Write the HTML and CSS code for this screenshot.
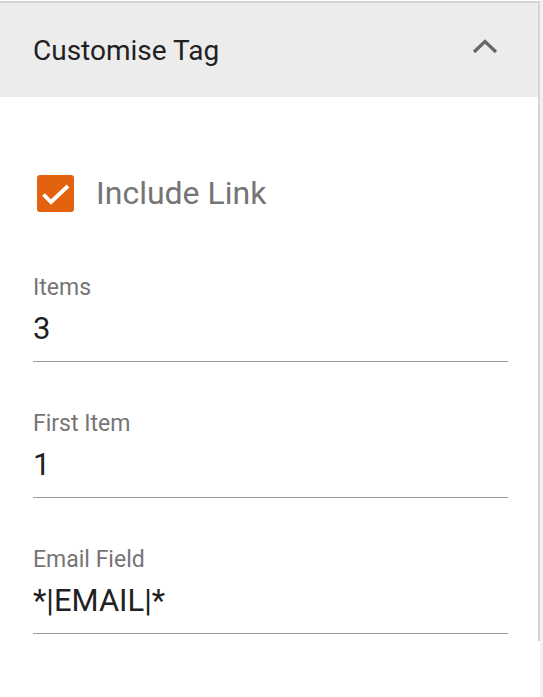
FILE: index.html
```html
<!DOCTYPE html>
<html>
<head>
<meta charset="utf-8">
<link rel="stylesheet" href="styles.css">
</head>
<body>
<div class="page">
  <div class="panel">
    <div class="header">
      <span class="title">Customise Tag</span>
      <svg class="chevron" width="26" height="16" viewBox="0 0 26 16"><path d="M2 14 L13 3.5 L24 14" fill="none" stroke="#666" stroke-width="3.2"/></svg>
    </div>
    <div class="body">
      <label class="check-row">
        <span class="checkbox">
          <svg width="37" height="37" viewBox="0 0 37 37"><path d="M6.5 19.5 L14 27 L31 11" fill="none" stroke="#fff" stroke-width="3.8"/></svg>
        </span>
        <span class="check-label">Include Link</span>
      </label>
      <div class="field">
        <div class="field-label">Items</div>
        <div class="field-value">3</div>
      </div>
      <div class="field">
        <div class="field-label">First Item</div>
        <div class="field-value">1</div>
      </div>
      <div class="field">
        <div class="field-label">Email Field</div>
        <div class="field-value">*|EMAIL|*</div>
      </div>
    </div>
  </div>
  <div class="scroll"></div>
</div>
</body>
</html>
```
FILE: styles.css
```css
html, body {
  margin: 0;
  padding: 0;
  background: #fff;
}
body {
  font-family: Roboto, "Liberation Sans", sans-serif;
}
.page {
  display: flex;
  align-items: flex-start;
  width: 543px;
  height: 697px;
}
.panel {
  width: 540px;
  height: 640px;
  margin-top: 1px;
  border-top: 2px solid #d4d4d4;
  border-right: 2px solid #d6d6d6;
  box-sizing: border-box;
}
.scroll {
  width: 3px;
  height: 697px;
  background: #f1f1f1;
}
.header {
  height: 94px;
  background: #ececec;
  display: flex;
  align-items: center;
  justify-content: space-between;
  padding: 0 40px 0 33px;
}
.title {
  font-size: 28px;
  color: #212121;
}
.chevron {
  display: block;
  margin-top: -9px;
}
.body {
  padding: 77px 30px 0 33px;
}
.check-row {
  display: flex;
  align-items: center;
  gap: 22px;
  padding-left: 4px;
  height: 38px;
}
.checkbox {
  width: 37px;
  height: 37px;
  border-radius: 3px;
  background: #e2620f;
  display: block;
}
.checkbox svg {
  display: block;
}
.check-label {
  font-size: 32px;
  color: #757575;
}
.field {
  border-bottom: 1px solid #9e9e9e;
}
.check-row + .field {
  margin-top: 62px;
}
.field + .field {
  margin-top: 48px;
}
.field-label {
  font-size: 23px;
  color: #757575;
  line-height: 28px;
}
.field-value {
  font-size: 31px;
  color: #212121;
  line-height: 40px;
  margin-top: 7px;
  padding-bottom: 12px;
}
```
